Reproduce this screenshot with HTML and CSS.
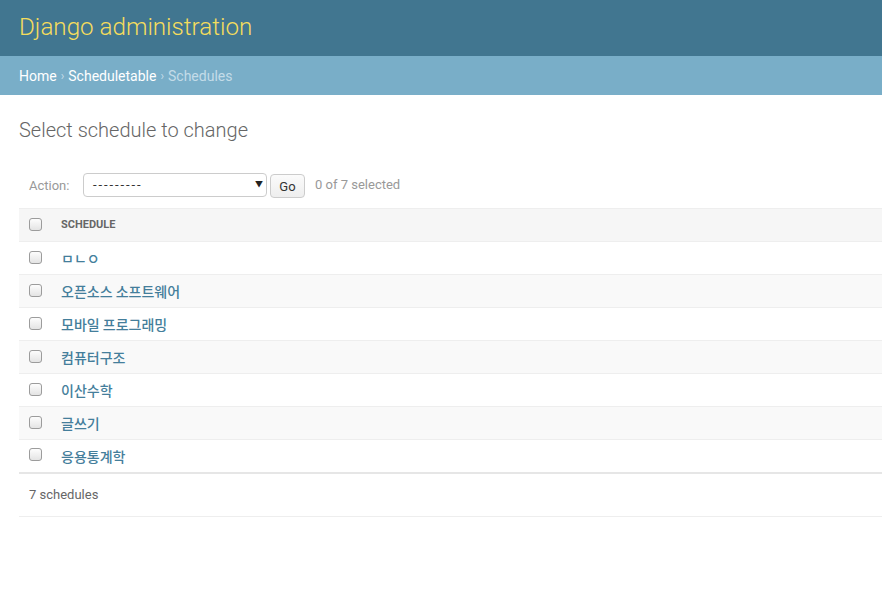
FILE: index.html
```html
<!DOCTYPE html>
<html lang="en">
<head>
<meta charset="utf-8">
<title>Select schedule to change | Django site admin</title>
<link rel="stylesheet" href="styles.css">
</head>
<body>
<header class="header">
  <h1 class="branding">Django administration</h1>
</header>
<nav class="breadcrumbs">
  <a href="#">Home</a><span class="sep">›</span><a href="#">Scheduletable</a><span class="sep">›</span><span class="current">Schedules</span>
</nav>
<main class="content">
  <h1 class="title">Select schedule to change</h1>
  <div class="actions">
    <label class="action-label">Action:</label>
    <span class="select-wrap">
      <span class="select">---------</span>
      <span class="arrow">▼</span>
    </span>
    <button class="go" type="button">Go</button>
    <span class="counter">0 of 7 selected</span>
  </div>
  <table class="result-list">
    <thead>
      <tr>
        <th class="check-col"><span class="cb"></span></th>
        <th class="col-name">Schedule</th>
      </tr>
    </thead>
    <tbody>
      <tr><td class="check-col"><span class="cb"></span></td><th><a href="#">ㅁㄴㅇ</a></th></tr>
      <tr><td class="check-col"><span class="cb"></span></td><th><a href="#">오픈소스 소프트웨어</a></th></tr>
      <tr><td class="check-col"><span class="cb"></span></td><th><a href="#">모바일 프로그래밍</a></th></tr>
      <tr><td class="check-col"><span class="cb"></span></td><th><a href="#">컴퓨터구조</a></th></tr>
      <tr><td class="check-col"><span class="cb"></span></td><th><a href="#">이산수학</a></th></tr>
      <tr><td class="check-col"><span class="cb"></span></td><th><a href="#">글쓰기</a></th></tr>
      <tr><td class="check-col"><span class="cb"></span></td><th><a href="#">응용통계학</a></th></tr>
    </tbody>
  </table>
  <p class="paginator">7 schedules</p>
</main>
</body>
</html>
```

FILE: styles.css
```css
* { box-sizing: border-box; }

html, body {
  margin: 0;
  padding: 0;
  background: #fff;
  color: #333;
  font-family: Roboto, "Noto Sans CJK KR", "Liberation Sans", sans-serif;
  font-size: 14px;
}

a { text-decoration: none; }

.header {
  height: 56px;
  background: #417690;
  display: flex;
  align-items: center;
  padding: 0 19px;
}

.branding {
  margin: 0;
  font-size: 24.2px;
  font-weight: 300;
  color: #f5dd5d;
  line-height: 28px;
  position: relative;
  top: -1px;
}

.breadcrumbs {
  height: 39px;
  background: #79aec8;
  display: flex;
  align-items: center;
  padding: 0 19px;
  font-size: 14px;
  color: #c4dce8;
}

.breadcrumbs a { color: #fff; }

.breadcrumbs .sep {
  margin: 0 4px;
  color: #c4dce8;
  font-size: 12px;
}

.breadcrumbs .current { color: #c4dce8; }

.content {
  padding: 22px 0 0 19px;
}

.title {
  margin: 0 0 22px;
  font-size: 20px;
  line-height: 26px;
  font-weight: 300;
  color: #666;
}

.actions {
  display: flex;
  align-items: center;
  padding: 8px 10px;
  height: 40px;
  margin-bottom: 3px;
  font-size: 13px;
}

.action-label {
  color: #999;
  width: 54px;
}

.select-wrap {
  position: relative;
  display: block;
  width: 184px;
  height: 24px;
}

.select {
  display: block;
  height: 24px;
  border: 1px solid #ccc;
  border-radius: 4px;
  padding: 0 9px;
  line-height: 22px;
  font-family: Roboto, "Liberation Sans", sans-serif;
  font-size: 13px;
  color: #333;
  letter-spacing: 1.9px;
  background: #fff;
}

.arrow {
  position: absolute;
  right: 4px;
  top: 7px;
  font-size: 8px;
  line-height: 10px;
  color: #222;
}

.go {
  margin-left: 3px;
  height: 24px;
  width: 35px;
  padding: 0;
  border: 1px solid #ccc;
  border-radius: 4px;
  background: linear-gradient(#fbfbfb, #eeeeee);
  font-family: Roboto, "Liberation Sans", sans-serif;
  font-size: 13px;
  color: #333;
  position: relative;
  top: 1px;
}

.counter {
  margin-left: 10px;
  color: #999;
  position: relative;
  top: -1px;
}

.result-list {
  width: 100%;
  border-collapse: collapse;
  font-size: 13px;
}

.result-list th,
.result-list td {
  text-align: left;
  padding: 8px 10px;
  line-height: 16px;
  height: 33px;
  border-bottom: 1px solid #eee;
  vertical-align: middle;
}

.result-list thead th {
  background: #f6f6f6;
  border-top: 1px solid #eee;
  color: #666;
  font-size: 11px;
  font-weight: 700;
  text-transform: uppercase;
  font-family: Roboto, "Liberation Sans", sans-serif;
}

.result-list .check-col {
  width: 32px;
  padding-right: 0;
}

.result-list tbody th {
  font-weight: 400;
  padding-top: 0;
  padding-bottom: 0;
}

.result-list tbody tr:nth-child(even) { background: #f9f9f9; }

.result-list tbody a {
  display: block;
  height: 16px;
  line-height: 16px;
  color: #447e9b;
  font-family: "Noto Sans CJK KR", Roboto, sans-serif;
  font-weight: 500;
  font-size: 14px;
}

.cb {
  display: block;
  width: 13px;
  height: 13px;
  border: 1px solid #9c9c9c;
  border-radius: 3px;
  background: linear-gradient(#fdfdfd, #e4e4e4);
  position: relative;
  top: -1px;
}

.result-list tbody tr:last-child th,
.result-list tbody tr:last-child td {
  border-bottom: 2px solid #e6e6e6;
}

.paginator {
  margin: 0;
  padding: 10px;
  line-height: 22px;
  font-size: 13px;
  color: #666;
  border-bottom: 1px solid #eee;
}
```
